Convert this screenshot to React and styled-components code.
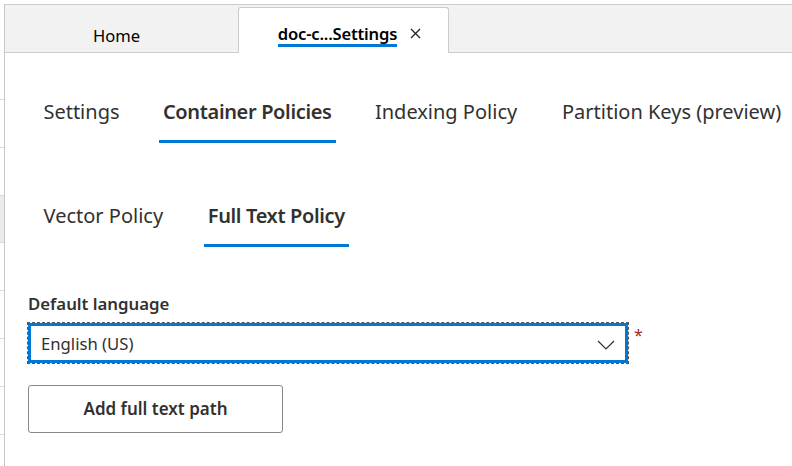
import React from "react";
import styled, { createGlobalStyle } from "styled-components";

const Global = createGlobalStyle`
  html, body { margin: 0; padding: 0; background: #fff; }
  body { font-family: "Noto Sans", "Open Sans", sans-serif; color: #323130; }
  * { box-sizing: border-box; }
`;

const Page = styled.div`
  display: flex;
  width: 792px;
  height: 466px;
  padding-top: 4px;
  overflow: hidden;
`;

const Gutter = styled.div`
  width: 5px;
  flex: none;
  border-right: 1px solid #c8c8c8;
  padding-top: 48px;
  display: flex;
  flex-direction: column;
`;

const GutterRow = styled.div`
  height: 48px;
  flex: none;
  border-bottom: 1px solid #dcdcdc;
  background: ${(p) => (p.$selected ? "#ebebeb" : "transparent")};
  ${(p) => p.$selected && "border-top: 1px solid #dcdcdc; margin-top: -1px;"}
`;

const Main = styled.div`
  flex: 1;
  display: flex;
  flex-direction: column;
  min-width: 0;
`;

const TabStrip = styled.div`
  height: 49px;
  flex: none;
  display: flex;
  align-items: flex-end;
  background: #f2f2f2;
  border-top: 1px solid #cccccc;
  border-bottom: 1px solid #cccccc;
`;

const DocTab = styled.div`
  position: relative;
  display: flex;
  align-items: center;
  justify-content: center;
  gap: 13px;
  font-size: 16.6px;
  color: #000;
  width: ${(p) => p.$width}px;
  height: ${(p) => (p.$active ? 46 : 47)}px;
  ${(p) =>
    p.$active
      ? `background: #fff;
         border: 1px solid #cccccc;
         border-bottom: none;
         border-radius: 3px 3px 0 0;
         margin-bottom: -1px;
         font-weight: 600;
         letter-spacing: -0.2px;
         padding-left: 12px;
         padding-top: 6px;`
      : `padding-top: 14px; padding-right: 10px;`}
`;

const DocTitle = styled.span`
  position: relative;
  line-height: 22px;
  &::after {
    content: "";
    position: absolute;
    left: 0;
    right: 0;
    bottom: -2px;
    height: 3px;
    background: #0078d4;
    display: ${(p) => (p.$active ? "block" : "none")};
  }
`;

const CloseGlyph = styled.svg`
  width: 11px;
  height: 11px;
  margin-top: -1px;
`;

const Content = styled.div`
  padding-left: 23px;
  display: flex;
  flex-direction: column;
`;

const Pivot = styled.div`
  display: flex;
  gap: ${(p) => p.$gap}px;
  margin-left: ${(p) => p.$ml}px;
  margin-top: ${(p) => p.$mt}px;
`;

const PivotLink = styled.div`
  position: relative;
  display: inline-grid;
  padding: 0 4px 17px;
  font-size: 20px;
  line-height: 28px;
  color: #323130;
  white-space: nowrap;
  & > span {
    grid-area: 1 / 1;
    text-align: center;
    font-weight: ${(p) => (p.$active ? 600 : 400)};
    letter-spacing: ${(p) => (p.$active ? "-0.35px" : "0")};
  }
  &::before {
    content: attr(data-text);
    grid-area: 1 / 1;
    font-weight: 600;
    letter-spacing: -0.35px;
    visibility: hidden;
  }
  &::after {
    content: "";
    position: absolute;
    left: 0;
    right: 0;
    bottom: 0;
    height: 3px;
    background: #0078d4;
    display: ${(p) => (p.$active ? "block" : "none")};
  }
`;

const Label = styled.div`
  margin-top: 46px;
  font-size: 16.8px;
  font-weight: 600;
  line-height: 22px;
  color: #323130;
`;

const FieldRow = styled.div`
  display: flex;
  align-items: flex-start;
  margin-top: 8px;
`;

const Select = styled.div`
  width: 600px;
  height: 40px;
  border: 3px solid #0078d4;
  outline: 1px dashed #555;
  outline-offset: 0;
  display: flex;
  align-items: center;
  justify-content: space-between;
  padding: 0 10px 0 10px;
  font-size: 16.7px;
  color: #323130;
  background: #fff;
`;

const Chevron = styled.svg`
  width: 18px;
  height: 10px;
  margin-top: 3px;
`;

const Required = styled.span`
  color: #a4262c;
  font-size: 16px;
  line-height: 16px;
  margin-left: 6px;
  margin-top: 4px;
`;

const Button = styled.button`
  margin-top: 22px;
  width: 255px;
  height: 48px;
  border: 1px solid #8a8886;
  border-radius: 3px;
  background: #fff;
  font-family: inherit;
  font-size: 17px;
  font-weight: 600;
  color: #323130;
  padding: 0 0 2px;
`;

const mainTabs = ["Settings", "Container Policies", "Indexing Policy", "Partition Keys (preview)"];
const subTabs = ["Vector Policy", "Full Text Policy"];

export default function App() {
  return (
    <>
      <Global />
      <Page>
        <Gutter>
          {[0, 1, 2, 3, 4, 5, 6, 7].map((i) => (
            <GutterRow key={i} $selected={i === 3} />
          ))}
        </Gutter>
        <Main>
          <TabStrip>
            <DocTab $width={233}>
              <DocTitle>Home</DocTitle>
            </DocTab>
            <DocTab $width={211} $active>
              <DocTitle $active>doc-c...Settings</DocTitle>
              <CloseGlyph viewBox="0 0 11 11">
                <path d="M1 1 L10 10 M10 1 L1 10" stroke="#222" strokeWidth="1.3" fill="none" />
              </CloseGlyph>
            </DocTab>
          </TabStrip>
          <Content>
            <Pivot $ml={11} $mt={45} $gap={35}>
              {mainTabs.map((t) => (
                <PivotLink key={t} data-text={t} $active={t === "Container Policies"}>
                  <span>{t}</span>
                </PivotLink>
              ))}
            </Pivot>
            <Pivot $ml={11} $mt={59} $gap={36}>
              {subTabs.map((t) => (
                <PivotLink key={t} data-text={t} $active={t === "Full Text Policy"}>
                  <span>{t}</span>
                </PivotLink>
              ))}
            </Pivot>
            <Label>Default language</Label>
            <FieldRow>
              <Select>
                <span>English (US)</span>
                <Chevron viewBox="0 0 18 10">
                  <polyline points="1,1 9,9 17,1" stroke="#323130" strokeWidth="1.2" fill="none" />
                </Chevron>
              </Select>
              <Required>*</Required>
            </FieldRow>
            <div>
              <Button>Add full text path</Button>
            </div>
          </Content>
        </Main>
      </Page>
    </>
  );
}
